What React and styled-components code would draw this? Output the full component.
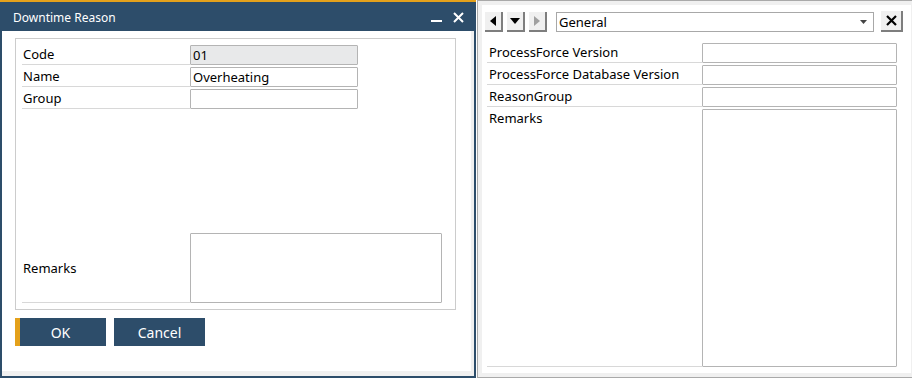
import React from "react";
import styled, { createGlobalStyle } from "styled-components";

const Global = createGlobalStyle`
  html, body { margin: 0; padding: 0; background: #ffffff; }
  body { font-family: "Noto Sans", "Open Sans", sans-serif; font-size: 13px; color: #000; }
  * { box-sizing: border-box; }
`;

const Page = styled.div`
  display: flex;
  width: 912px;
  height: 378px;
`;

const LeftWindow = styled.div`
  width: 477px;
  height: 378px;
  display: flex;
  flex-direction: column;
  border-top: 2px solid #e4a11b;
`;

const TitleBar = styled.div`
  height: 29px;
  background: #2d4d6a;
  color: #fff;
  display: flex;
  align-items: center;
  padding: 1px 12px 0 13px;
  font-size: 12px;
`;

const Title = styled.div`
  flex: 1;
`;

const TitleIcons = styled.div`
  display: flex;
  align-items: center;
  gap: 10px;
`;

const WindowBody = styled.div`
  flex: 1;
  display: flex;
  border: 2px solid #2d4d6a;
  border-top: none;
  background: #f0f0f0;
`;

const WhiteInner = styled.div`
  flex: 1;
  background: #fff;
  margin: 0 3px 5px 0;
  padding: 7px 15px 0 13px;
  display: flex;
  flex-direction: column;
`;

const GroupBox = styled.div`
  height: 272px;
  border: 1px solid #cccccc;
  padding: 5px 13px 6px 6px;
  display: flex;
  flex-direction: column;
`;

const Row = styled.div`
  display: flex;
  flex: ${(p) => (p.$fill ? "1" : "none")};
  height: ${(p) => (p.$fill ? "auto" : (p.$h || 22) + "px")};
  margin-top: ${(p) => (p.$push ? "auto" : "0")};
`;

const Label = styled.div`
  width: ${(p) => p.$w}px;
  border-bottom: 1px solid #d8d8d8;
  display: flex;
  align-items: ${(p) => (p.$top ? "flex-start" : "center")};
  padding-left: ${(p) => (p.$pl ?? 1)}px;
  padding-top: ${(p) => (p.$top ? "1px" : "0")};
  margin-bottom: ${(p) => (p.$mb ?? 1)}px;
  line-height: 18px;
`;

const Field = styled.div`
  width: ${(p) => p.$w}px;
  height: ${(p) => (p.$fill ? "auto" : p.$h ? p.$h + "px" : "20px")};
  border: 1px solid #b4b4b4;
  background: ${(p) => (p.$disabled ? "#e8e9ea" : "#fff")};
  border-radius: 1px;
  padding: 0 2px;
  line-height: 18px;
  margin-top: ${(p) => (p.$mt ?? 1)}px;
`;

const ButtonRow = styled.div`
  display: flex;
  gap: 8px;
  margin-top: 8px;
`;

const Button = styled.button`
  width: ${(p) => p.$w}px;
  height: 28px;
  background: #2d4d6a;
  color: #fff;
  border: none;
  border-left: ${(p) => (p.$primary ? "5px solid #e4a11b" : "none")};
  font-family: "Noto Sans", "Open Sans", sans-serif;
  font-size: 14px;
  padding: 0;
  padding-right: ${(p) => (p.$primary ? "5px" : "0")};
`;

const RightWindow = styled.div`
  flex: 1;
  margin-left: 1px;
  border: 1px solid #a9a9a9;
  border-right-color: #9a9a9a;
  background: #f0f0f0;
  padding: 4px;
  display: flex;
`;

const RightInner = styled.div`
  flex: 1;
  background: #fff;
  display: flex;
  flex-direction: column;
  padding: 6px 5px 6px 3px;
`;

const NavRow = styled.div`
  display: flex;
  align-items: center;
  height: 21px;
`;

const NavButton = styled.div`
  width: 18px;
  height: 20px;
  margin-right: 4px;
  background: #f0f0f0;
  border-right: 2px solid #7e7e7e;
  border-bottom: 2px solid #7e7e7e;
  display: flex;
  align-items: center;
  justify-content: center;
`;

const Select = styled.div`
  flex: 1;
  height: 20px;
  margin-left: 5px;
  border: 1px solid #a8a8a8;
  display: flex;
  align-items: center;
  padding: 0 6px 0 2px;
  line-height: 18px;
`;

const SelectText = styled.div`
  flex: 1;
`;

const CloseButton = styled.div`
  width: 22px;
  height: 21px;
  margin-left: 7px;
  margin-right: 3px;
  border-right: 2px solid #7e7e7e;
  border-bottom: 2px solid #7e7e7e;
  display: flex;
  align-items: center;
  justify-content: center;
  background: #f0f0f0;
`;

const RightRows = styled.div`
  flex: 1;
  display: flex;
  flex-direction: column;
  margin-top: 10px;
  padding: 0 9px 0 2px;
`;

export default function App() {
  return (
    <Page>
      <Global />
      <LeftWindow>
        <TitleBar>
          <Title>Downtime Reason</Title>
          <TitleIcons>
            <svg width="12" height="12" viewBox="0 0 12 12">
              <rect x="0" y="9" width="11" height="2" fill="#fff" />
            </svg>
            <svg width="11" height="11" viewBox="0 0 11 11">
              <path d="M1 1 L10 10 M10 1 L1 10" stroke="#fff" strokeWidth="2" />
            </svg>
          </TitleIcons>
        </TitleBar>
        <WindowBody>
          <WhiteInner>
            <GroupBox>
              <Row>
                <Label $w={168}>Code</Label>
                <Field $w={168} $disabled>01</Field>
              </Row>
              <Row>
                <Label $w={168}>Name</Label>
                <Field $w={168}>Overheating</Field>
              </Row>
              <Row>
                <Label $w={168}>Group</Label>
                <Field $w={168}></Field>
              </Row>
              <Row $h={70} $push>
                <Label $w={168} $mb={0}>Remarks</Label>
                <Field $w={252} $h={70} $mt={0}></Field>
              </Row>
            </GroupBox>
            <ButtonRow>
              <Button $w={91} $primary>OK</Button>
              <Button $w={91}>Cancel</Button>
            </ButtonRow>
          </WhiteInner>
        </WindowBody>
      </LeftWindow>
      <RightWindow>
        <RightInner>
          <NavRow>
            <NavButton>
              <svg width="8" height="10" viewBox="0 0 8 10">
                <path d="M7 0 L7 10 L1 5 Z" fill="#000" />
              </svg>
            </NavButton>
            <NavButton>
              <svg width="10" height="8" viewBox="0 0 10 8">
                <path d="M0 1 L10 1 L5 7 Z" fill="#000" />
              </svg>
            </NavButton>
            <NavButton>
              <svg width="8" height="10" viewBox="0 0 8 10">
                <path d="M1 0 L1 10 L7 5 Z" fill="#a0a0a0" />
              </svg>
            </NavButton>
            <Select>
              <SelectText>General</SelectText>
              <svg width="7" height="4" viewBox="0 0 7 4">
                <path d="M0 0 L7 0 L3.5 4 Z" fill="#444" />
              </svg>
            </Select>
            <CloseButton>
              <svg width="11" height="11" viewBox="0 0 11 11">
                <path d="M1 1 L10 10 M10 1 L1 10" stroke="#000" strokeWidth="2.2" />
              </svg>
            </CloseButton>
          </NavRow>
          <RightRows>
            <Row>
              <Label $w={215} $pl={2}>ProcessForce Version</Label>
              <Field $w={195}></Field>
            </Row>
            <Row>
              <Label $w={215} $pl={2}>ProcessForce Database Version</Label>
              <Field $w={195}></Field>
            </Row>
            <Row>
              <Label $w={215} $pl={2}>ReasonGroup</Label>
              <Field $w={195}></Field>
            </Row>
            <Row $fill>
              <Label $w={215} $pl={2} $top $mb={0}>Remarks</Label>
              <Field $w={195} $fill $mt={1}></Field>
            </Row>
          </RightRows>
        </RightInner>
      </RightWindow>
    </Page>
  );
}
